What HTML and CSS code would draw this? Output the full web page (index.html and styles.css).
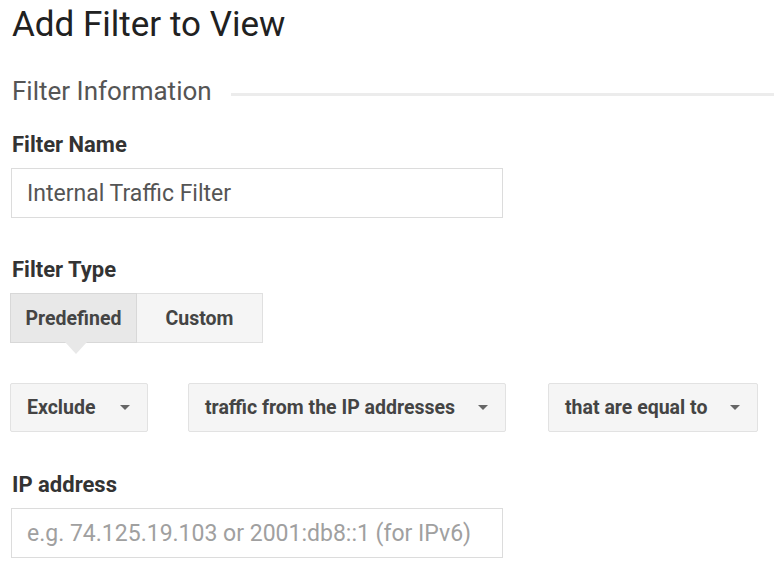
FILE: index.html
```html
<!DOCTYPE html>
<html>
<head>
<meta charset="utf-8">
<link rel="stylesheet" href="styles.css">
</head>
<body>
<div class="page">
  <h1 class="title">Add Filter to View</h1>
  <div class="section-head">
    <span class="section-title">Filter Information</span>
    <span class="section-rule"></span>
  </div>

  <label class="label label-name">Filter Name</label>
  <div class="input input-name">Internal Traffic Filter</div>

  <label class="label label-type">Filter Type</label>
  <div class="tabs">
    <div class="tab tab-active">Predefined<span class="pointer"></span></div>
    <div class="tab">Custom</div>
  </div>

  <div class="selects">
    <div class="select sel-1"><span>Exclude</span><span class="caret"></span></div>
    <div class="select sel-2"><span>traffic from the IP addresses</span><span class="caret"></span></div>
    <div class="select sel-3"><span>that are equal to</span><span class="caret"></span></div>
  </div>

  <label class="label label-ip">IP address</label>
  <div class="input input-ip placeholder">e.g. 74.125.19.103 or 2001:db8::1 (for IPv6)</div>
</div>
</body>
</html>
```
FILE: styles.css
```css
html, body {
  margin: 0;
  padding: 0;
  background: #ffffff;
}
body {
  font-family: Roboto, "Liberation Sans", Arial, sans-serif;
  color: #222;
}
.page {
  padding: 4px 0 0 12px;
  width: 762px;
  box-sizing: border-box;
}
.title {
  margin: 0;
  font-size: 35px;
  line-height: 42px;
  font-weight: 400;
  color: #212121;
}
.section-head {
  display: flex;
  align-items: center;
  margin-top: 29px;
  height: 32px;
}
.section-title {
  font-size: 26px;
  line-height: 32px;
  color: #555;
  white-space: nowrap;
}
.section-rule {
  flex: 1;
  height: 3px;
  background: #ececec;
  margin-left: 19px;
  margin-top: 6px;
  margin-right: -12px;
}
.label {
  display: block;
  font-size: 22px;
  line-height: 26px;
  font-weight: 700;
  color: #333;
}
.label-name { margin-top: 25px; }
.label-type { margin-top: 39px; }
.label-ip { margin-top: 40px; }

.input {
  box-sizing: border-box;
  width: 492px;
  height: 50px;
  margin-left: -1px;
  margin-top: 10px;
  border: 1px solid #dcdcdc;
  padding: 0 15px;
  display: flex;
  align-items: center;
  font-size: 23px;
  color: #555;
}
.placeholder { color: #a0a0a0; }

.tabs {
  display: flex;
  margin-top: 10px;
  margin-left: -2px;
  height: 50px;
}
.tab {
  position: relative;
  box-sizing: border-box;
  width: 127px;
  height: 50px;
  border: 1px solid #e0e0e0;
  background: #f5f5f5;
  display: flex;
  align-items: center;
  justify-content: center;
  font-size: 19.5px;
  font-weight: 700;
  color: #444;
}
.tab + .tab { border-left: none; width: 126px; }
.tab-active {
  background: #e8e8e8;
  border-color: #d8d8d8;
}
.pointer {
  position: absolute;
  left: 54px;
  bottom: -12px;
  width: 0;
  height: 0;
  border-left: 11px solid transparent;
  border-right: 11px solid transparent;
  border-top: 12px solid #e8e8e8;
}

.selects {
  display: flex;
  margin-top: 40px;
  margin-left: -2px;
}
.select {
  box-sizing: border-box;
  height: 49px;
  border: 1px solid #e2e2e2;
  border-radius: 2px;
  background: #f5f5f5;
  display: flex;
  align-items: center;
  justify-content: space-between;
  padding: 0 17px 0 16px;
  font-size: 19.5px;
  font-weight: 700;
  color: #444;
}
.sel-1 { width: 138px; }
.sel-2 { width: 318px; margin-left: 40px; }
.sel-3 { width: 210px; margin-left: 42px; }
.caret {
  width: 0;
  height: 0;
  border-left: 5px solid transparent;
  border-right: 5px solid transparent;
  border-top: 5px solid #666;
}
```
